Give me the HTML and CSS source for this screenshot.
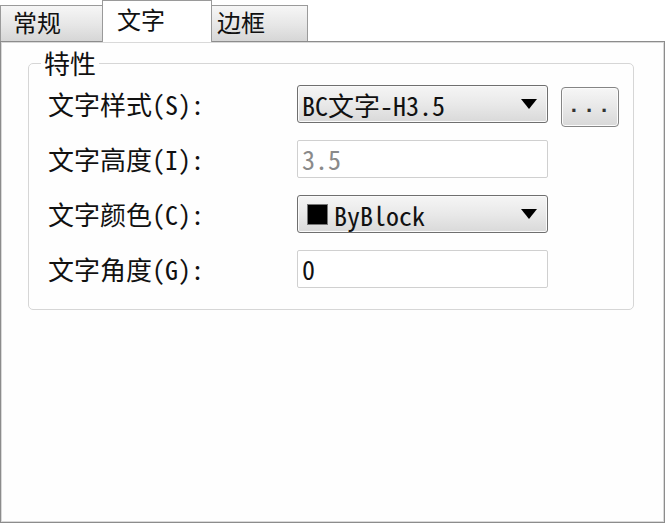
FILE: index.html
```html
<!DOCTYPE html>
<html lang="zh-CN">
<head>
<meta charset="utf-8">
<title>文字</title>
<link rel="stylesheet" href="styles.css">
</head>
<body>
<div class="dialog">
  <div class="tabs">
    <div class="tab tab-general">常规</div>
    <div class="tab tab-text active">文字</div>
    <div class="tab tab-border">边框</div>
  </div>
  <div class="panel">
    <fieldset class="group">
      <legend class="legend">特性</legend>
      <div class="form">
        <label class="label">文字样式(S):</label>
        <div class="combo"><span class="value">BC文字-H3.5</span><span class="arrow"></span></div>
        <button class="more" type="button">...</button>

        <label class="label">文字高度(I):</label>
        <div class="input disabled">3.5</div>
        <span></span>

        <label class="label">文字颜色(C):</label>
        <div class="combo"><span class="value"><span class="swatch"></span>ByBlock</span><span class="arrow"></span></div>
        <span></span>

        <label class="label">文字角度(G):</label>
        <div class="input">0</div>
        <span></span>
      </div>
    </fieldset>
  </div>
</div>
</body>
</html>
```

FILE: styles.css
```css
* { box-sizing: border-box; }

html, body {
  margin: 0;
  padding: 0;
  background: #ffffff;
}

body {
  width: 666px;
  height: 524px;
  overflow: hidden;
  font-family: "Noto Sans Mono CJK SC", "Noto Sans CJK SC", "Liberation Mono", monospace;
  color: #111;
}

.dialog {
  width: 666px;
}

.tabs {
  display: flex;
  align-items: flex-end;
  height: 41px;
  font-family: "Noto Sans CJK SC", sans-serif;
  font-size: 24px;
}

.tab {
  height: 36px;
  line-height: 32px;
  border: 1px solid #9a9a9a;
  border-bottom: none;
  background: linear-gradient(#f6f6f6, #e6e6e6 55%, #d6d6d6);
  color: #111;
}

.tab-general {
  width: 103px;
  padding-left: 12px;
}

.tab-text {
  width: 110px;
  padding-left: 14px;
  margin-left: -1px;
}

.tab-border {
  width: 97px;
  padding-left: 5px;
  margin-left: -1px;
}

.tab.active {
  height: 42px;
  line-height: 36px;
  background: #ffffff;
  position: relative;
  z-index: 1;
  margin-bottom: -1px;
}

.panel {
  height: 482px;
  width: 665px;
  border: 1px solid #8c8c8c;
  box-shadow: inset 1px 1px 0 #d9d9d9, inset -1px -1px 0 #d9d9d9;
  background: #fefefe;
  padding: 6px 30px 0 27px;
}

.group {
  margin: 0;
  border: 1px solid #d6d6d6;
  border-radius: 5px;
  padding: 7px 0 21px 19px;
  min-width: 0;
}

.legend {
  font-family: "Noto Sans CJK SC", sans-serif;
  font-size: 26px;
  line-height: 30px;
  height: 30px;
  padding: 0 3px;
  margin-left: -7px;
}

.form {
  display: grid;
  grid-template-columns: 236px 251px 58px;
  grid-auto-rows: 38px;
  column-gap: 13px;
  row-gap: 17px;
  align-items: center;
}

.label {
  font-size: 26px;
  line-height: 38px;
  white-space: nowrap;
}

.combo {
  height: 38px;
  border: 1px solid #6f6f6f;
  border-radius: 3px;
  background: linear-gradient(#f5f5f5, #e9e9e9 50%, #d9d9d9);
  display: flex;
  align-items: center;
  justify-content: space-between;
  padding: 0 10px 0 4px;
  font-size: 26px;
  box-shadow: inset 0 0 0 1px #fafafa;
}

.value {
  display: flex;
  align-items: center;
  white-space: nowrap;
}

.swatch {
  width: 21px;
  height: 21px;
  background: #000;
  border: 1px solid #777;
  margin: 0 6px 0 5px;
}

.arrow {
  width: 0;
  height: 0;
  border-left: 8px solid transparent;
  border-right: 8px solid transparent;
  border-top: 10px solid #000;
}

.more {
  height: 40px;
  width: 58px;
  margin-top: 2px;
  margin-bottom: -4px;
  border: 1px solid #858585;
  border-radius: 4px;
  background: linear-gradient(#f6f6f6, #e8e8e8 50%, #d8d8d8);
  box-shadow: inset 0 0 0 1px #fbfbfb;
  font-family: "Liberation Mono", monospace;
  font-size: 22px;
  font-weight: bold;
  letter-spacing: 2px;
  color: #333;
  padding: 0;
  line-height: 38px;
}

.input {
  height: 38px;
  border: 1px solid #d0d0d0;
  border-radius: 2px;
  background: #ffffff;
  padding: 0 4px;
  font-size: 26px;
  line-height: 36px;
}

.input.disabled {
  color: #8a8a8a;
}
```
